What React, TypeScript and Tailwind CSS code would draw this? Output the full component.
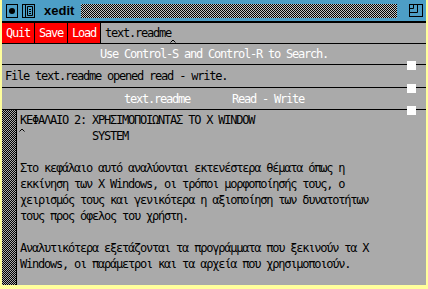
import React from 'react';

const mono = 'font-["DejaVu_Sans_Mono","Liberation_Mono",monospace] text-[12px] tracking-[-1.22px]';

const lines = [
    'ΚΕΦΑΛΑΙΟ 2: ΧΡΗΣΙΜΟΠΟΙΩΝΤΑΣ ΤΟ Χ WINDOW',
    '            SYSTEM',
    '',
    'Στο κεφάλαιο αυτό αναλύονται εκτενέστερα θέματα όπως η',
    'εκκίνηση των X Windows, οι τρόποι μορφοποίησής τους, ο',
    'χειρισμός τους και γενικότερα η αξιοποίηση των δυνατοτήτων',
    'τους προς όφελος του χρήστη.',
    '',
    'Αναλυτικότερα εξετάζονται τα προγράμματα που ξεκινούν τα X',
    'Windows, οι παράμετροι και τα αρχεία που χρησιμοποιούν.',
];

function Caret() {
    return (
        <svg width="6" height="4" viewBox="0 0 6 4" className="block">
            <path d="M0.5 3.5 L3 1 L5.5 3.5" stroke="#000" strokeWidth="1" fill="none" />
        </svg>
    );
}

export default function App() {
    return (
        <div className="w-[428px] h-[289px] bg-[#ffff9c] pl-[2px] overflow-hidden">
            <div className="relative w-[424px] h-[285px] flex flex-col bg-[#aaaaaa]">
                {/* title bar */}
                <div className="h-[23px] shrink-0 flex items-center bg-[#4d9ec6] border-b-2 border-black">
                    <svg width="12" height="14" viewBox="0 0 12 14" className="ml-[4px] shrink-0">
                        <rect x="0.5" y="0.5" width="11" height="13" fill="none" stroke="#000" />
                        <circle cx="6" cy="7" r="3" fill="#000" />
                    </svg>
                    <svg width="13" height="14" viewBox="0 0 13 14" className="ml-[4px] shrink-0">
                        <rect x="0.5" y="0.5" width="12" height="13" fill="none" stroke="#000" />
                        <path d="M3.5 1 V13 M5.5 2.5 H10.5 V11.5 H5.5 Z M7 5.5 H9 M7 7.5 H9 M7 9.5 H9" fill="none" stroke="#000" />
                    </svg>
                    <span className='ml-[9px] font-["Liberation_Sans",Arial,sans-serif] font-bold text-[13px] leading-none text-black'>
                        xedit
                    </span>
                    <div className="ml-[7px] flex-1 h-[14px] bg-[repeating-conic-gradient(#000_0_25%,#c4c4c4_0_50%)] bg-[length:2px_2px]" />
                    <svg width="14" height="13" viewBox="0 0 14 13" className="ml-[12px] mr-[3px] shrink-0">
                        <rect x="0.5" y="0.5" width="13" height="12" fill="none" stroke="#000" />
                        <path d="M0.5 8.5 H8.5 V0.5 M0.5 4.5 H4.5 V0.5" fill="none" stroke="#000" />
                    </svg>
                </div>

                {/* buttons */}
                <div className={`h-[21px] shrink-0 flex border-b border-black ${mono}`}>
                    {['Quit', 'Save', 'Load'].map(b => (
                        <div key={b} className="w-[33px] flex items-center justify-center bg-[#ff0000] text-white border-r border-black">
                            {b}
                        </div>
                    ))}
                    <div className="relative flex-1 flex items-center pl-[4px] text-black">
                        text.readme
                        <div className="absolute left-[69px] top-[16px]">
                            <Caret />
                        </div>
                    </div>
                </div>

                {/* label */}
                <div className={`h-[21px] shrink-0 flex items-center justify-center border-b border-black text-white ${mono}`}>
                    Use Control-S and Control-R to Search.
                </div>

                {/* messages */}
                <div className={`h-[23px] shrink-0 flex items-center pl-[3px] border-b border-black text-black ${mono}`}>
                    File text.readme opened read - write.
                </div>

                {/* file label */}
                <div className={`h-[22px] shrink-0 flex items-center justify-center border-b border-black text-white whitespace-pre ${mono}`}>
                    {'text.readme       Read - Write'}
                </div>

                {/* text area */}
                <div className="flex-1 flex min-h-0">
                    <div className="w-[15px] shrink-0 border-r border-black bg-[repeating-conic-gradient(#000_0_25%,#aaaaaa_0_50%)] bg-[length:2px_2px]" />
                    <div className={`relative flex-1 pl-[3px] pt-[2px] text-black leading-[16px] whitespace-pre ${mono}`}>
                        {lines.map((l, i) => (
                            <div key={i} className="h-[16px]">{l}</div>
                        ))}
                        <div className="absolute left-[2px] top-[18px]">
                            <Caret />
                        </div>
                    </div>
                </div>

                {/* pane grips */}
                <div className="absolute right-[10px] top-[61px] w-[9px] h-[9px] bg-white" />
                <div className="absolute right-[10px] top-[84px] w-[9px] h-[9px] bg-white" />
                <div className="absolute right-[10px] top-[106px] w-[9px] h-[9px] bg-white" />
            </div>
        </div>
    );
}
